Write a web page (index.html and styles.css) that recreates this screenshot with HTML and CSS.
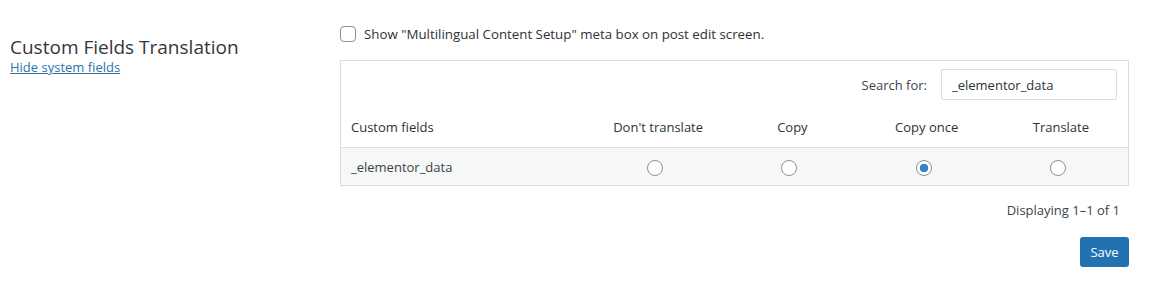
FILE: index.html
```html
<!DOCTYPE html>
<html lang="en">
<head>
  <meta charset="UTF-8" />
  <title>Custom Fields Translation</title>
  <link rel="stylesheet" href="styles.css">
</head>
<body>
  <div class="settings-row">
    <div class="settings-label">
      <h3>Custom Fields Translation</h3>
      <a href="#" class="toggle-link">Hide system fields</a>
    </div>

    <div class="settings-body">
      <label class="meta-option">
        <input type="checkbox" />
        <span>Show "Multilingual Content Setup" meta box on post edit screen.</span>
      </label>

      <div class="fields-box">
        <div class="search-bar">
          <label for="cf-search">Search for:</label>
          <input type="text" id="cf-search" value="_elementor_data" />
        </div>

        <table class="fields-table">
          <thead>
            <tr>
              <th class="col-name">Custom fields</th>
              <th>Don't translate</th>
              <th>Copy</th>
              <th>Copy once</th>
              <th>Translate</th>
            </tr>
          </thead>
          <tbody>
            <tr>
              <td class="col-name">_elementor_data</td>
              <td><input type="radio" name="cf-elementor" value="0" /></td>
              <td><input type="radio" name="cf-elementor" value="1" /></td>
              <td><input type="radio" name="cf-elementor" value="3" checked /></td>
              <td><input type="radio" name="cf-elementor" value="2" /></td>
            </tr>
          </tbody>
        </table>
      </div>

      <div class="pagination">Displaying 1&ndash;1 of 1</div>

      <div class="actions">
        <button class="save-button">Save</button>
      </div>
    </div>
  </div>
</body>
</html>
```

FILE: styles.css
```css
body {
  margin: 0;
  font-family: "Open Sans", "Noto Sans", sans-serif;
  font-size: 13px;
  background-color: #ffffff;
  color: #3c434a;
}

.settings-row {
  display: flex;
  padding: 0 10px;
}

.settings-label {
  width: 330px;
  padding-top: 36px;
}

.settings-label h3 {
  margin: 0;
  font-size: 19px;
  font-weight: 400;
  line-height: 22px;
  color: #32373c;
}

.toggle-link {
  display: block;
  margin-top: 2px;
  color: #2e72a8;
  line-height: 15px;
}

.settings-body {
  width: 789px;
  padding-top: 25px;
}

.meta-option {
  display: flex;
  align-items: center;
  gap: 8px;
  height: 18px;
  font-size: 13.3px;
  color: #2c3338;
}

.meta-option input {
  appearance: none;
  width: 16px;
  height: 16px;
  margin: 0;
  border: 1px solid #8c8f94;
  border-radius: 4px;
  background: #fff;
}

.fields-box {
  margin-top: 17px;
  border: 1px solid #dcdcde;
}

.search-bar {
  display: flex;
  justify-content: flex-end;
  align-items: center;
  gap: 14px;
  padding: 8px 11px 7px;
}

.search-bar input {
  width: 176px;
  height: 31px;
  box-sizing: border-box;
  padding: 0 10px;
  border: 1px solid #dcdcde;
  border-radius: 2px;
  font: inherit;
  color: #2c3338;
}

.fields-table {
  width: 100%;
  table-layout: fixed;
  border-collapse: collapse;
}

.fields-table th {
  font-weight: 400;
  text-align: center;
  height: 40px;
  padding: 0;
  color: #2c3338;
  border-bottom: 1px solid #dcdcde;
}

.fields-table td {
  text-align: center;
  height: 37px;
  padding: 0;
  background-color: #f6f7f7;
}

.fields-table .col-name {
  width: 240px;
  text-align: left;
  padding-left: 10px;
}

.fields-table input[type="radio"] {
  appearance: none;
  width: 16px;
  height: 16px;
  margin: 0 0 0 -6px;
  vertical-align: middle;
  border: 1px solid #8c8f94;
  border-radius: 50%;
  background: #fff;
}

.fields-table input[type="radio"]:checked {
  background: radial-gradient(circle, #3582c4 0 4px, #fff 4.5px);
}

.pagination {
  text-align: right;
  padding: 15px 9px 0 0;
  line-height: 18px;
}

.actions {
  display: flex;
  justify-content: flex-end;
  margin-top: 18px;
}

.save-button {
  width: 49px;
  height: 30px;
  padding: 0;
  border: none;
  border-radius: 3px;
  background-color: #2271b1;
  color: #fff;
  font: inherit;
}
```
